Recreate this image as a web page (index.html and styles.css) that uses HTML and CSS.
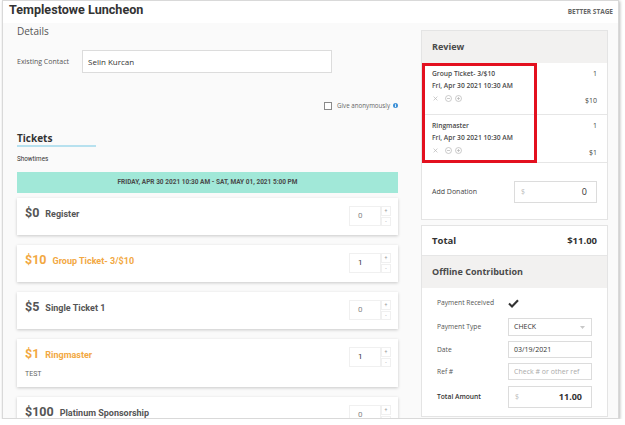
FILE: index.html
```html
<!DOCTYPE html>
<html lang="en">
<head>
<meta charset="utf-8">
<title>Templestowe Luncheon</title>
<link rel="stylesheet" href="styles.css">
</head>
<body>
<div class="frame">
  <header class="topbar">
    <h1 class="event-title">Templestowe Luncheon</h1>
    <span class="brand">BETTER STAGE</span>
  </header>
  <div class="content">
    <main class="left">
      <h2 class="section-title">Details</h2>
      <div class="contact-row">
        <span class="field-label">Existing Contact</span>
        <div class="text-input">Selin Kurcan</div>
      </div>
      <div class="anon-row">
        <span class="checkbox"></span>
        <span class="anon-label">Give anonymously</span>
        <svg class="info-icon" width="5" height="5" viewBox="0 0 10 10"><circle cx="5" cy="5" r="5" fill="#3b8fd6"/><rect x="4.1" y="4.2" width="1.8" height="4" fill="#fff"/><circle cx="5" cy="2.6" r="1" fill="#fff"/></svg>
      </div>
      <h3 class="tickets-title">Tickets</h3>
      <div class="showtimes">Showtimes</div>
      <div class="showtime-bar">FRIDAY, APR 30 2021 10:30 AM - SAT, MAY 01, 2021 5:00 PM</div>

      <div class="ticket">
        <div class="ticket-row">
          <div class="ticket-title"><span class="price">$0</span><span class="name">Register</span></div>
          <div class="qty"><div class="qty-input">0</div><div class="spinner"><span>+</span><span>-</span></div></div>
        </div>
      </div>
      <div class="ticket ticket-selected">
        <div class="ticket-row">
          <div class="ticket-title"><span class="price">$10</span><span class="name">Group Ticket- 3/$10</span></div>
          <div class="qty"><div class="qty-input qty-set">1</div><div class="spinner"><span>+</span><span>-</span></div></div>
        </div>
      </div>
      <div class="ticket">
        <div class="ticket-row">
          <div class="ticket-title"><span class="price">$5</span><span class="name">Single Ticket 1</span></div>
          <div class="qty"><div class="qty-input">0</div><div class="spinner"><span>+</span><span>-</span></div></div>
        </div>
      </div>
      <div class="ticket ticket-selected">
        <div class="ticket-row">
          <div class="ticket-title"><span class="price">$1</span><span class="name">Ringmaster</span></div>
          <div class="qty"><div class="qty-input qty-set">1</div><div class="spinner"><span>+</span><span>-</span></div></div>
        </div>
        <div class="ticket-note">TEST</div>
      </div>
      <div class="ticket">
        <div class="ticket-row">
          <div class="ticket-title"><span class="price">$100</span><span class="name">Platinum Sponsorship</span></div>
          <div class="qty"><div class="qty-input">0</div><div class="spinner"><span>+</span><span>-</span></div></div>
        </div>
      </div>
    </main>

    <aside class="right">
      <section class="panel">
        <div class="panel-head">Review</div>
        <div class="cart-items">
          <div class="cart-item">
            <div class="item-info">
              <div class="item-line">Group Ticket- 3/$10</div>
              <div class="item-line">Fri, Apr 30 2021 10:30 AM</div>
              <div class="item-actions">
                <svg width="5" height="5" viewBox="0 0 6 6"><path d="M0.7 0.7l4.6 4.6M5.3 0.7L0.7 5.3" stroke="#b5b5b5" stroke-width="0.8"/></svg>
                <svg width="7" height="7" viewBox="0 0 7 7"><circle cx="3.5" cy="3.5" r="3" fill="none" stroke="#b5b5b5" stroke-width="0.7"/><path d="M1.9 3.5h3.2" stroke="#b5b5b5" stroke-width="0.7"/></svg>
                <svg width="7" height="7" viewBox="0 0 7 7"><circle cx="3.5" cy="3.5" r="3" fill="none" stroke="#b5b5b5" stroke-width="0.7"/><path d="M1.9 3.5h3.2M3.5 1.9v3.2" stroke="#b5b5b5" stroke-width="0.7"/></svg>
              </div>
            </div>
            <div class="item-side"><span>1</span><span>$10</span></div>
          </div>
          <div class="cart-item">
            <div class="item-info">
              <div class="item-line">Ringmaster</div>
              <div class="item-line">Fri, Apr 30 2021 10:30 AM</div>
              <div class="item-actions">
                <svg width="5" height="5" viewBox="0 0 6 6"><path d="M0.7 0.7l4.6 4.6M5.3 0.7L0.7 5.3" stroke="#b5b5b5" stroke-width="0.8"/></svg>
                <svg width="7" height="7" viewBox="0 0 7 7"><circle cx="3.5" cy="3.5" r="3" fill="none" stroke="#b5b5b5" stroke-width="0.7"/><path d="M1.9 3.5h3.2" stroke="#b5b5b5" stroke-width="0.7"/></svg>
                <svg width="7" height="7" viewBox="0 0 7 7"><circle cx="3.5" cy="3.5" r="3" fill="none" stroke="#b5b5b5" stroke-width="0.7"/><path d="M1.9 3.5h3.2M3.5 1.9v3.2" stroke="#b5b5b5" stroke-width="0.7"/></svg>
              </div>
            </div>
            <div class="item-side"><span>1</span><span>$1</span></div>
          </div>
          <div class="highlight-box"></div>
        </div>
        <div class="donation">
          <span class="donation-label">Add Donation</span>
          <div class="money-input"><span class="currency">$</span><span class="amount">0</span></div>
        </div>
      </section>

      <section class="panel summary">
        <div class="total-row"><span>Total</span><span>$11.00</span></div>
        <div class="panel-head offline-head">Offline Contribution</div>
        <div class="fields">
          <div class="field-row row-check">
            <span class="f-label">Payment Received</span>
            <svg width="11" height="9" viewBox="0 0 11 9"><path d="M1 4.6l3 2.9L10 1.2" fill="none" stroke="#333" stroke-width="2.1"/></svg>
          </div>
          <div class="field-row row-gap-lg">
            <span class="f-label">Payment Type</span>
            <div class="f-input select">CHECK<svg class="caret" width="5" height="3" viewBox="0 0 5 3"><path d="M0 0h5L2.5 3z" fill="#c8c8c8"/></svg></div>
          </div>
          <div class="field-row">
            <span class="f-label">Date</span>
            <div class="f-input">03/19/2021</div>
          </div>
          <div class="field-row">
            <span class="f-label">Ref #</span>
            <div class="f-input placeholder">Check # or other ref</div>
          </div>
          <div class="field-row row-total">
            <span class="f-label f-strong">Total Amount</span>
            <div class="money-input total-input"><span class="currency">$</span><span class="amount amount-strong">11.00</span></div>
          </div>
        </div>
      </section>
    </aside>
  </div>
</div>
</body>
</html>
```

FILE: styles.css
```css
body {
  margin: 0;
  background: #fff;
  font-family: "Open Sans", "Liberation Sans", sans-serif;
  color: #333;
}

.frame {
  margin-left: 2px;
  width: 617px;
  height: 419px;
  box-sizing: border-box;
  border: 1px solid #d9d9d9;
  box-shadow: 1px 1px 3px rgba(0, 0, 0, 0.28);
  display: flex;
  flex-direction: column;
  overflow: hidden;
  background: #fafafa;
}

.topbar {
  height: 22px;
  flex: none;
  background: #fff;
  display: flex;
  align-items: flex-start;
  justify-content: space-between;
  padding: 0 5px 0 6px;
}

.event-title {
  margin: 0;
  font: bold 12.6px/18px Roboto, "Liberation Sans", sans-serif;
  color: #333;
}

.brand {
  font: bold 6.5px/21px "Open Sans", sans-serif;
  color: #666;
}

.content {
  flex: 1;
  min-height: 0;
  display: flex;
  gap: 23px;
  padding-left: 14px;
}

.left {
  width: 381px;
  flex: none;
}

.right {
  width: 187px;
  flex: none;
  padding-top: 7px;
}

/* Details */
.section-title {
  margin: 0;
  font: normal 10px/16px "Open Sans", sans-serif;
  color: #555;
}

.contact-row {
  margin-top: 11px;
  display: flex;
  align-items: center;
}

.field-label {
  width: 65px;
  font: 7px/10px "Open Sans", sans-serif;
  color: #555;
}

.text-input {
  width: 250px;
  height: 23px;
  box-sizing: border-box;
  background: #fff;
  border: 1px solid #dcdcdc;
  padding-left: 5px;
  font: 8px/21px "Open Sans", sans-serif;
  color: #333;
}

.anon-row {
  margin-top: 28px;
  height: 9px;
  display: flex;
  align-items: center;
  justify-content: flex-end;
}

.checkbox {
  width: 8px;
  height: 8px;
  box-sizing: border-box;
  border: 1px solid #8a8a8a;
  background: #fff;
  margin-right: 5px;
}

.anon-label {
  font: 6.2px/9px "Open Sans", sans-serif;
  color: #666;
}

.info-icon {
  margin-left: 3px;
}

/* Tickets */
.tickets-title {
  margin: 21px 0 0;
  width: 79px;
  font: bold 10px/14px "Open Sans", sans-serif;
  color: #333;
  border-bottom: 2px solid #b7e1ef;
}

.showtimes {
  margin-top: 7px;
  font: 6.3px/10px Roboto, sans-serif;
  color: #333;
}

.showtime-bar {
  margin-top: 8px;
  height: 21px;
  background: #a1e8d8;
  text-align: center;
  font: bold 6.5px/21px Roboto, sans-serif;
  color: #4a4a4a;
}

.ticket {
  margin-top: 5px;
  margin-bottom: 10px;
  box-sizing: border-box;
  background: #fff;
  box-shadow: 0 1px 3px rgba(0, 0, 0, 0.2);
  padding: 8px 7px 8px 8px;
}

.ticket + .ticket {
  margin-top: 0;
}

.ticket-row {
  height: 21px;
  display: flex;
  align-items: flex-start;
  justify-content: space-between;
}

.ticket-title {
  display: flex;
  align-items: baseline;
  color: #555;
}

.ticket-selected .ticket-title {
  color: #f2a842;
}

.price {
  font: bold 12.5px/14px Roboto, sans-serif;
  margin-right: 6px;
}

.name {
  font: bold 9px/14px Roboto, sans-serif;
}

.qty {
  display: flex;
  height: 20px;
}

.qty-input {
  width: 32px;
  box-sizing: border-box;
  background: #fff;
  border: 1px solid #f0f0f0;
  padding-left: 8px;
  font: 8px/18px Roboto, sans-serif;
  color: #888;
}

.qty-input.qty-set {
  color: #333;
}

.spinner {
  width: 10px;
  height: 20px;
  display: flex;
  flex-direction: column;
  gap: 1px;
}

.spinner span {
  flex: 1;
  min-height: 0;
  background: #fff;
  border: 1px solid #f0f0f0;
  font: 5px/7px Roboto, sans-serif;
  color: #999;
  text-align: center;
}

.ticket-note {
  margin-top: 1px;
  font: 7px/10px Roboto, sans-serif;
  color: #666;
}

/* Right panels */
.panel {
  background: #fff;
  border: 1px solid #e4e4e4;
}

.panel-head {
  height: 32px;
  background: #f2f1f0;
  padding-left: 10px;
  font: bold 9px/32px "Open Sans", sans-serif;
  color: #4a4a4a;
}

.cart-items {
  position: relative;
}

.cart-item {
  height: 48px;
  box-sizing: border-box;
  border-bottom: 1px solid #e6e6e6;
  display: flex;
  justify-content: space-between;
  padding: 5px 10px 0;
}

.cart-item:first-child {
  height: 52px;
}

.item-line {
  font: 600 6.7px/12px "Open Sans", sans-serif;
  color: #4a4a4a;
}

.item-actions {
  height: 13px;
  display: flex;
  align-items: center;
  gap: 3px;
  padding-left: 1px;
}

.item-actions svg:first-child {
  margin-right: 4px;
}

.item-side {
  display: flex;
  flex-direction: column;
  justify-content: space-between;
  align-items: flex-end;
  font: 7px/12px "Open Sans", sans-serif;
  color: #444;
}

.item-side span:last-child {
  margin-top: 1px;
}

.item-side {
  justify-content: flex-start;
  gap: 14px;
}

.highlight-box {
  position: absolute;
  left: 0;
  top: 0;
  width: 115px;
  height: 100px;
  box-sizing: border-box;
  border: 3px solid #e3101f;
}

.donation {
  display: flex;
  align-items: center;
  justify-content: space-between;
  padding: 18px 10px 16px;
}

.donation-label {
  font: 7px/10px "Open Sans", sans-serif;
  color: #444;
}

.money-input {
  width: 83px;
  height: 22px;
  box-sizing: border-box;
  background: #fff;
  border: 1px solid #dcdcdc;
  display: flex;
  align-items: center;
  justify-content: space-between;
  padding: 0 9px 0 6px;
}

.currency {
  font: 7px/10px "Open Sans", sans-serif;
  color: #bbb;
}

.amount {
  font: 9px/12px "Open Sans", sans-serif;
  color: #333;
}

.amount-strong {
  font-weight: bold;
}

.summary {
  margin-top: 5px;
}

.total-row {
  height: 29px;
  display: flex;
  align-items: center;
  justify-content: space-between;
  padding: 0 10px;
  font: bold 9.5px/12px "Open Sans", sans-serif;
  color: #333;
}

.offline-head {
  border-top: 1px solid #e6e6e6;
}

.fields {
  padding: 9px 15px 8px;
}

.field-row {
  display: flex;
  align-items: center;
  margin-top: 5px;
}

.row-check {
  margin-top: 0;
  height: 12px;
}

.row-gap-lg {
  margin-top: 9px;
}

.row-total {
  margin-top: 6px;
}

.f-label {
  width: 71px;
  flex: none;
  font: 6.7px/10px "Open Sans", sans-serif;
  color: #555;
}

.f-strong {
  font-weight: 600;
  color: #333;
}

.f-input {
  width: 84px;
  height: 17px;
  box-sizing: border-box;
  background: #fff;
  border: 1px solid #dcdcdc;
  padding-left: 5px;
  font: 7px/15px "Open Sans", sans-serif;
  color: #333;
}

.f-input.placeholder {
  color: #aaa;
}

.select {
  height: 18px;
  line-height: 16px;
  display: flex;
  align-items: center;
  justify-content: space-between;
  padding-right: 6px;
}

.total-input {
  width: 84px;
}
```
